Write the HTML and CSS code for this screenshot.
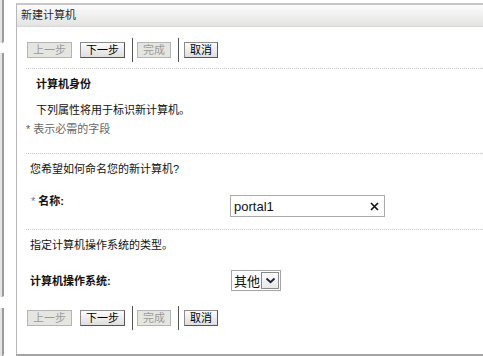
FILE: index.html
```html
<!DOCTYPE html>
<html lang="zh-CN">
<head>
  <meta charset="UTF-8">
  <title>新建计算机</title>
  <link rel="stylesheet" href="styles.css">
</head>
<body>
  <div class="page">
    <div class="rail">
      <div class="rail-seg top"></div>
      <div class="rail-seg middle"></div>
      <div class="rail-seg bottom"></div>
    </div>

    <div class="dialog">
      <div class="dialog-title">新建计算机</div>

      <div class="dialog-body">
        <div class="toolbar">
          <button class="btn" disabled>上一步</button>
          <button class="btn next">下一步</button>
          <span class="sep"></span>
          <button class="btn" disabled>完成</button>
          <span class="sep"></span>
          <button class="btn cancel">取消</button>
        </div>

        <div class="section identity">
          <h3>计算机身份</h3>
          <p class="intro">下列属性将用于标识新计算机。</p>
          <p class="required-note">* 表示必需的字段</p>
        </div>

        <div class="section">
          <p class="question">您希望如何命名您的新计算机?</p>
          <div class="field name-field">
            <label for="name"><span class="star">*</span> 名称:</label>
            <div class="text-box">
              <input type="text" id="name" value="portal1">
              <span class="clear">
                <svg width="9" height="9" viewBox="0 0 9 9"><path d="M1 1 L8 8 M8 1 L1 8" stroke="#111" stroke-width="1.6"/></svg>
              </span>
            </div>
          </div>
        </div>

        <div class="section">
          <p class="question">指定计算机操作系统的类型。</p>
          <div class="field os-field">
            <label>计算机操作系统:</label>
            <div class="select-box">
              <span class="select-value">其他</span>
              <span class="select-arrow">
                <svg width="11" height="7" viewBox="0 0 11 7"><path d="M1.5 1.5 L5.5 5.2 L9.5 1.5" fill="none" stroke="#1a2140" stroke-width="1.8"/></svg>
              </span>
            </div>
          </div>
        </div>

        <div class="toolbar bottom-bar">
          <button class="btn" disabled>上一步</button>
          <button class="btn next">下一步</button>
          <span class="sep"></span>
          <button class="btn" disabled>完成</button>
          <span class="sep"></span>
          <button class="btn cancel">取消</button>
        </div>
      </div>
    </div>
  </div>
</body>
</html>
```

FILE: styles.css
```css
body {
  margin: 0;
  padding: 0;
  background-color: white;
  font-family: 'Liberation Sans', 'Noto Sans CJK SC', sans-serif;
  font-size: 11px;
  color: #111;
  overflow: hidden;
}

.page {
  display: flex;
  height: 356px;
}

/* left strip of the page behind the dialog */
.rail {
  width: 5px;
  margin-right: 12px;
  display: flex;
  flex-direction: column;
}

.rail-seg {
  width: 2px;
  background-color: #e4e4e4;
  border-right: 2px solid #9a9a9a;
  border-radius: 0 0 2px 0;
}

.rail-seg.top {
  height: 43px;
}

.rail-seg.middle {
  height: 244px;
  margin-top: 10px;
}

.rail-seg.bottom {
  flex: 1;
  margin-top: 11px;
}

.dialog {
  width: 480px;
  flex-shrink: 0;
  margin-top: 3px;
  height: 349px;
  border-top: 2px solid #c6c6c6;
  border-left: 1px solid #b8b8b8;
  border-bottom: 2px solid #a2a2a2;
  display: flex;
  flex-direction: column;
}

.dialog-title {
  height: 21px;
  line-height: 21px;
  padding-left: 4px;
  color: #2a2a2a;
  background: linear-gradient(#fbfbfb, #e3e4e2);
  border-bottom: 1px solid #d6d6d6;
}

.dialog-body {
  padding-left: 9px;
}

.toolbar {
  display: flex;
  align-items: center;
  height: 24px;
  margin-top: 11px;
  padding-left: 1px;
  margin-bottom: 6px;
}

.btn {
  height: 16px;
  padding: 0 5px;
  font-family: inherit;
  font-size: 11px;
  line-height: 14px;
  color: #000;
  background: linear-gradient(#fbfbfb, #dedede);
  border: 1px solid #8c8c8c;
  border-right-color: #555;
  border-bottom-color: #555;
  border-radius: 0;
  margin: 0;
}

.btn:disabled {
  color: #9a9a9a;
  background: #e6e6e1;
  border-color: #b4b4b4;
}

.btn.next {
  margin-left: 8px;
}

.sep {
  width: 1px;
  height: 24px;
  background-color: #555;
  margin: 0 4px 0 7px;
}

.btn.cancel {
  margin-left: 1px;
}

.section {
  border-top: 1px dotted #c8c8c8;
}

.section p,
.section h3 {
  margin: 0;
  line-height: 16px;
  font-size: 11px;
}

.identity {
  padding: 7px 0 16px 10px;
}

.identity h3 {
  font-weight: bold;
}

.identity .intro {
  margin-top: 10px;
}

.identity .required-note {
  margin-top: 3px;
  margin-left: -10px;
  color: #666;
}

.question {
  padding: 7px 0 0 4px;
}

.field {
  display: grid;
  grid-template-columns: 200px 155px;
  padding-left: 4px;
}

.field label {
  font-weight: bold;
  line-height: 16px;
}

.star {
  font-weight: normal;
  color: #777;
}

.name-field {
  margin-top: 16px;
  padding-bottom: 12px;
  align-items: start;
}

.name-field label {
  padding-left: 1px;
}

.text-box {
  margin-top: 2px;
  height: 20px;
  border: 1px solid #ababab;
  display: flex;
  align-items: center;
}

.text-box input {
  flex: 1;
  width: 100px;
  border: none;
  outline: none;
  padding: 0 0 0 3px;
  font-family: 'Liberation Sans', sans-serif;
  font-size: 13px;
  color: #111;
  background: transparent;
}

.clear {
  display: flex;
  width: 20px;
  justify-content: center;
}

.os-field {
  margin-top: 17px;
  padding-bottom: 9px;
  align-items: center;
}

.select-box {
  justify-self: start;
  margin-left: 1px;
  display: flex;
  align-items: center;
  height: 19px;
  border: 1px solid #a6a6a6;
}

.select-value {
  padding: 0 1px 0 2px;
  font-family: 'Noto Sans CJK SC', sans-serif;
  font-size: 13px;
  line-height: 18px;
}

.select-arrow {
  width: 18px;
  height: 17px;
  margin-right: 1px;
  display: flex;
  align-items: center;
  justify-content: center;
  background: linear-gradient(#fdfdfd, #e8e8e8);
  border: 1px solid #8a8a8a;
  box-sizing: border-box;
}

.bottom-bar {
  margin-top: 6px;
}
```
